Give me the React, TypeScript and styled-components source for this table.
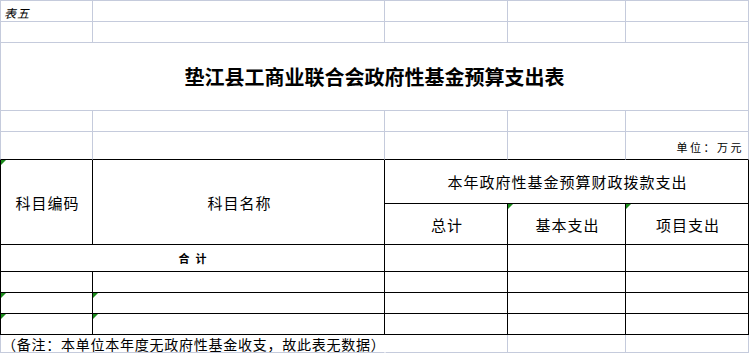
import React from "react";
import styled, { createGlobalStyle, css } from "styled-components";

const LIGHT = "#c5cbdc";
const DARK = "#000000";

type Edge = "l" | "d" | "n";
const edgeColor = (e?: Edge) =>
  e === "d" ? DARK : e === "l" ? LIGHT : "transparent";

const Global = createGlobalStyle`
  html, body { margin: 0; padding: 0; background: #ffffff; }
  body { font-family: "Noto Sans CJK SC", "Noto Sans", sans-serif; color: #000; }
`;

const Sheet = styled.div`
  display: grid;
  width: 749px;
  grid-template-columns: 93px 292px 123px 118px 123px;
  grid-template-rows: 22px 21px 68px 21px 28px 44px 41px 27px 21px 21px 21px 18px;
  background: #fff;
  overflow: hidden;
`;

interface CellProps {
  $span?: number;
  $rows?: number;
  $top?: Edge;
  $left?: Edge;
  $right?: Edge;
  $bottom?: Edge;
  $align?: "left" | "center" | "right";
  $corner?: boolean;
}

const Cell = styled.div<CellProps>`
  position: relative;
  box-sizing: border-box;
  display: flex;
  align-items: center;
  justify-content: ${(p) =>
    p.$align === "left" ? "flex-start" : p.$align === "right" ? "flex-end" : "center"};
  padding: 0 3px;
  white-space: nowrap;
  grid-column: span ${(p) => p.$span ?? 1};
  grid-row: span ${(p) => p.$rows ?? 1};
  border-right: 1px solid ${(p) => edgeColor(p.$right ?? "l")};
  border-bottom: 1px solid ${(p) => edgeColor(p.$bottom ?? "l")};
  ${(p) => p.$top && css`border-top: 1px solid ${edgeColor(p.$top)};`}
  ${(p) => p.$left && css`border-left: 1px solid ${edgeColor(p.$left)};`}
  ${(p) =>
    p.$corner &&
    css`
      &::before {
        content: "";
        position: absolute;
        left: 0;
        top: 0;
        width: 0;
        height: 0;
        border-top: 5px solid #1a8a1a;
        border-right: 5px solid transparent;
      }
    `}
`;

const SheetLabel = styled.span`
  font-size: 12px;
  font-style: italic;
  letter-spacing: 1px;
  margin-top: 2px;
`;

const Title = styled.h1`
  margin: 0;
  font-size: 20px;
  font-weight: 700;
  letter-spacing: 0;
`;

const Unit = styled.span`
  font-size: 11px;
  letter-spacing: 2.5px;
  margin-right: 1px;
  margin-top: 2px;
`;

const Head = styled.span`
  font-size: 15px;
  letter-spacing: 1px;
  margin-left: 2px;
`;

const Total = styled.span`
  font-size: 11px;
  font-weight: 700;
  letter-spacing: 6px;
  margin-left: 6px;
`;

const Note = styled.span`
  font-size: 14px;
  letter-spacing: 0.75px;
  margin-left: -2px;
`;

const LightRow: React.FC<{ first?: boolean; children?: React.ReactNode }> = ({ first, children }) => (
  <>
    <Cell $left="l" $top={first ? "l" : undefined} $align="left">
      {children}
    </Cell>
    <Cell $top={first ? "l" : undefined} />
    <Cell $top={first ? "l" : undefined} />
    <Cell $top={first ? "l" : undefined} />
    <Cell $top={first ? "l" : undefined} />
  </>
);

const DataRow: React.FC<{ marked?: boolean }> = ({ marked }) => (
  <>
    <Cell $left="d" $right="d" $bottom="d" $corner={marked} />
    <Cell $right="d" $bottom="d" $corner={marked} />
    <Cell $right="d" $bottom="d" />
    <Cell $right="d" $bottom="d" />
    <Cell $right="d" $bottom="d" />
  </>
);

export default function App() {
  return (
    <>
      <Global />
      <Sheet>
        <LightRow first>
          <SheetLabel>表五</SheetLabel>
        </LightRow>
        <LightRow />
        <Cell $span={5} $left="l">
          <Title>垫江县工商业联合会政府性基金预算支出表</Title>
        </Cell>
        <LightRow />

        <Cell $left="l" $bottom="d" />
        <Cell $bottom="d" />
        <Cell $bottom="d" />
        <Cell $bottom="d" />
        <Cell $bottom="d" $align="right">
          <Unit>单位：万元</Unit>
        </Cell>

        <Cell $rows={2} $left="d" $right="d" $bottom="d" $corner>
          <Head>科目编码</Head>
        </Cell>
        <Cell $rows={2} $right="d" $bottom="d">
          <Head>科目名称</Head>
        </Cell>
        <Cell $span={3} $right="d" $bottom="d">
          <Head>本年政府性基金预算财政拨款支出</Head>
        </Cell>
        <Cell $right="d" $bottom="d">
          <Head>总计</Head>
        </Cell>
        <Cell $right="d" $bottom="d" $corner>
          <Head>基本支出</Head>
        </Cell>
        <Cell $right="d" $bottom="d" $corner>
          <Head>项目支出</Head>
        </Cell>

        <Cell $span={2} $left="d" $right="d" $bottom="d">
          <Total>合计</Total>
        </Cell>
        <Cell $right="d" $bottom="d" />
        <Cell $right="d" $bottom="d" />
        <Cell $right="d" $bottom="d" />

        <DataRow />
        <DataRow marked />
        <DataRow marked />

        <Cell $span={2} $left="l" $right="n" $align="left">
          <Note>（备注：本单位本年度无政府性基金收支，故此表无数据）</Note>
        </Cell>
        <Cell $left="n" />
        <Cell />
        <Cell />
      </Sheet>
    </>
  );
}
